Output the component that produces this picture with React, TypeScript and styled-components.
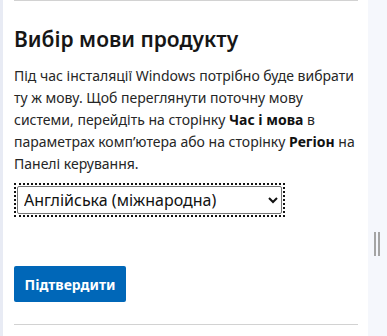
import React from "react";
import styled, { createGlobalStyle } from "styled-components";

const GlobalStyle = createGlobalStyle`
  html, body {
    margin: 0;
    padding: 0;
    background: #f5f7fc;
  }
  body {
    font-family: "Noto Sans", "Open Sans", sans-serif;
    color: #1f1f1f;
  }
`;

const Page = styled.div`
  display: flex;
  width: 387px;
  height: 336px;
  overflow: hidden;
`;

const EdgeStrip = styled.div`
  width: 3px;
  background: #e8ebf4;
`;

const Panel = styled.main`
  width: 344px;
  background: #ffffff;
  padding: 0 10px 0 11px;
  display: flex;
  flex-direction: column;
`;

const Divider = styled.hr<{ $top?: number }>`
  border: 0;
  height: 1px;
  background: #d2d2d2;
  margin: ${(p) => p.$top ?? 0}px 0 0 0;
`;

const Title = styled.h2`
  font-size: 21px;
  font-weight: 600;
  line-height: 28px;
  margin: 24px 0 0 0;
  color: #161616;
`;

const Text = styled.p`
  font-size: 14px;
  line-height: 22px;
  margin: 12px 0 0 0;
  color: #262626;

  b {
    font-weight: 700;
    color: #111;
  }
`;

const SelectFocus = styled.div`
  margin-top: 8px;
  width: 265px;
  padding: 1px;
  border: 2px dotted #111;
`;

const Select = styled.select`
  display: block;
  width: 100%;
  height: 28px;
  font-family: "Noto Sans", "Open Sans", sans-serif;
  font-size: 16px;
  color: #111;
  background: #fff;
  border: 1px solid #767676;
  border-radius: 2px;
  padding: 0 2px;
  outline: none;
`;

const SubmitButton = styled.button`
  margin-top: 49px;
  align-self: flex-start;
  width: 112px;
  height: 36px;
  background: #0067b8;
  color: #ffffff;
  border: 0;
  border-radius: 2px;
  font-family: "Noto Sans", "Open Sans", sans-serif;
  font-size: 14px;
  font-weight: 700;
  cursor: pointer;
`;

const SideRail = styled.div`
  flex: 1;
  display: flex;
  justify-content: center;
  padding-top: 232px;
`;

const Grip = styled.div`
  width: 2px;
  height: 24px;
  border-left: 2px solid #a4a4a4;
  border-right: 2px solid #a4a4a4;
  margin-left: -1px;
`;

export default function App() {
  return (
    <>
      <GlobalStyle />
      <Page>
        <EdgeStrip />
        <Panel>
          <Divider />
          <Title>Вибір мови продукту</Title>
          <Text>
            Під час інсталяції Windows потрібно буде вибрати ту ж мову. Щоб
            переглянути поточну мову системи, перейдіть на сторінку{" "}
            <b>Час і мова</b> в параметрах комп’ютера або на сторінку{" "}
            <b>Регіон</b> на Панелі керування.
          </Text>
          <SelectFocus>
            <Select defaultValue="en-gb">
              <option value="en-gb">Англійська (міжнародна)</option>
              <option value="en-us">Англійська</option>
              <option value="uk">Українська</option>
            </Select>
          </SelectFocus>
          <SubmitButton>Підтвердити</SubmitButton>
          <Divider $top={22} />
        </Panel>
        <SideRail>
          <Grip />
        </SideRail>
      </Page>
    </>
  );
}
